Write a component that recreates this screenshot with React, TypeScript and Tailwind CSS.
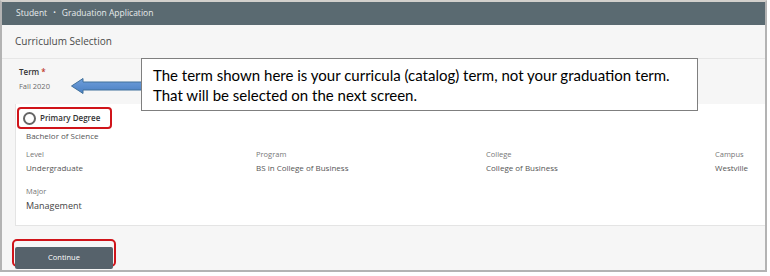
import React from 'react';

const fields = [
  { label: 'Level', value: 'Undergraduate' },
  { label: 'Program', value: 'BS in College of Business' },
  { label: 'College', value: 'College of Business' },
  { label: 'Campus', value: 'Westville' },
];

const App: React.FC = () => {
  return (
    <div className="w-[770px] h-[276px] bg-white" style={{ fontFamily: '"Open Sans", sans-serif' }}>
      <div className="relative w-[767px] h-[272px] border-2 border-[#b3b3b3] border-t-[#d2d0cc] bg-[#f6f6f6] flex flex-col overflow-hidden">
        {/* breadcrumb */}
        <div className="h-[23px] shrink-0 bg-[#5a6a71] flex items-center pl-[14px] text-[8.5px] text-[#e6eaec] gap-[6px]">
          <span>Student</span>
          <span className="text-[7px]">•</span>
          <span>Graduation Application</span>
        </div>

        {/* title */}
        <div className="h-[34px] shrink-0 border-b border-[#e6e6e6] flex items-center pl-[13px] text-[10px] text-[#4a4a4a]">
          Curriculum Selection
        </div>

        {/* term */}
        <div className="h-[45px] shrink-0 pl-[17px] pt-[7px] flex flex-col">
          <span className="text-[8px] font-semibold text-[#333] leading-[12px]">
            Term <span className="text-[#c0392b]">*</span>
          </span>
          <span className="text-[7.5px] text-[#6b6b6b] leading-[12px] mt-[2px]">Fall 2020</span>
        </div>

        {/* curriculum card */}
        <div className="h-[122px] shrink-0 ml-[13px] bg-white border-l border-b border-[#e4e4e4] pl-[1px] pt-[3px]">
          <div className="w-[95px] h-[22px] border-2 border-[#d0141a] rounded-[4px] flex items-center pl-[4px] gap-[4px]">
            <span className="w-[13px] h-[13px] rounded-full border-2 border-[#666]"></span>
            <span className="text-[8px] font-semibold text-[#333]">Primary Degree</span>
          </div>
          <div className="pl-[9px]">
            <div className="text-[8px] text-[#555] leading-[12px] mt-[1px]">Bachelor of Science</div>
            <div className="grid grid-cols-[230px_230px_229px_1fr] mt-[6px]">
              {fields.map((f) => (
                <div key={f.label} className="flex flex-col">
                  <span className="text-[7.5px] text-[#777] leading-[12px]">{f.label}</span>
                  <span className="text-[8px] text-[#555] leading-[12px] mt-[2px]">{f.value}</span>
                </div>
              ))}
            </div>
            <div className="flex flex-col mt-[11px]">
              <span className="text-[7.5px] text-[#777] leading-[12px]">Major</span>
              <span className="text-[9px] text-[#444] leading-[14px] mt-[2px]">Management</span>
            </div>
          </div>
        </div>

        {/* footer */}
        <div className="flex-1 pl-[10px] pt-[13px]">
          <div className="w-[104px] h-[28px] border-2 border-[#d0141a] rounded-[5px] p-[1px]">
            <button className="w-full h-full bg-[#56626b] rounded-[2px] text-white text-[7.5px]">Continue</button>
          </div>
        </div>

        {/* arrow */}
        <svg className="absolute left-[66px] top-[73px]" width="76" height="22" viewBox="0 0 76 22">
          <defs>
            <linearGradient id="arrowFill" x1="0" y1="0" x2="0" y2="1">
              <stop offset="0%" stopColor="#6f9fdc" />
              <stop offset="100%" stopColor="#4a7fc2" />
            </linearGradient>
          </defs>
          <path d="M3.5 11 L15 3.5 L15 7 L74 7 L74 15 L15 15 L15 18.5 Z" fill="url(#arrowFill)" stroke="#41719c" strokeWidth="1" />
        </svg>

        {/* callout */}
        <div
          className="absolute left-[139px] top-[56px] w-[557px] h-[53px] bg-white border border-[#7f7f7f] pl-[11px] pt-[6px] text-[15px] leading-[20px] text-black"
          style={{ fontFamily: 'Lato, "Open Sans", sans-serif' }}
        >
          <div>The term shown here is your curricula (catalog) term, not your graduation term.</div>
          <div>That will be selected on the next screen.</div>
        </div>
      </div>
    </div>
  );
};

export default App;
